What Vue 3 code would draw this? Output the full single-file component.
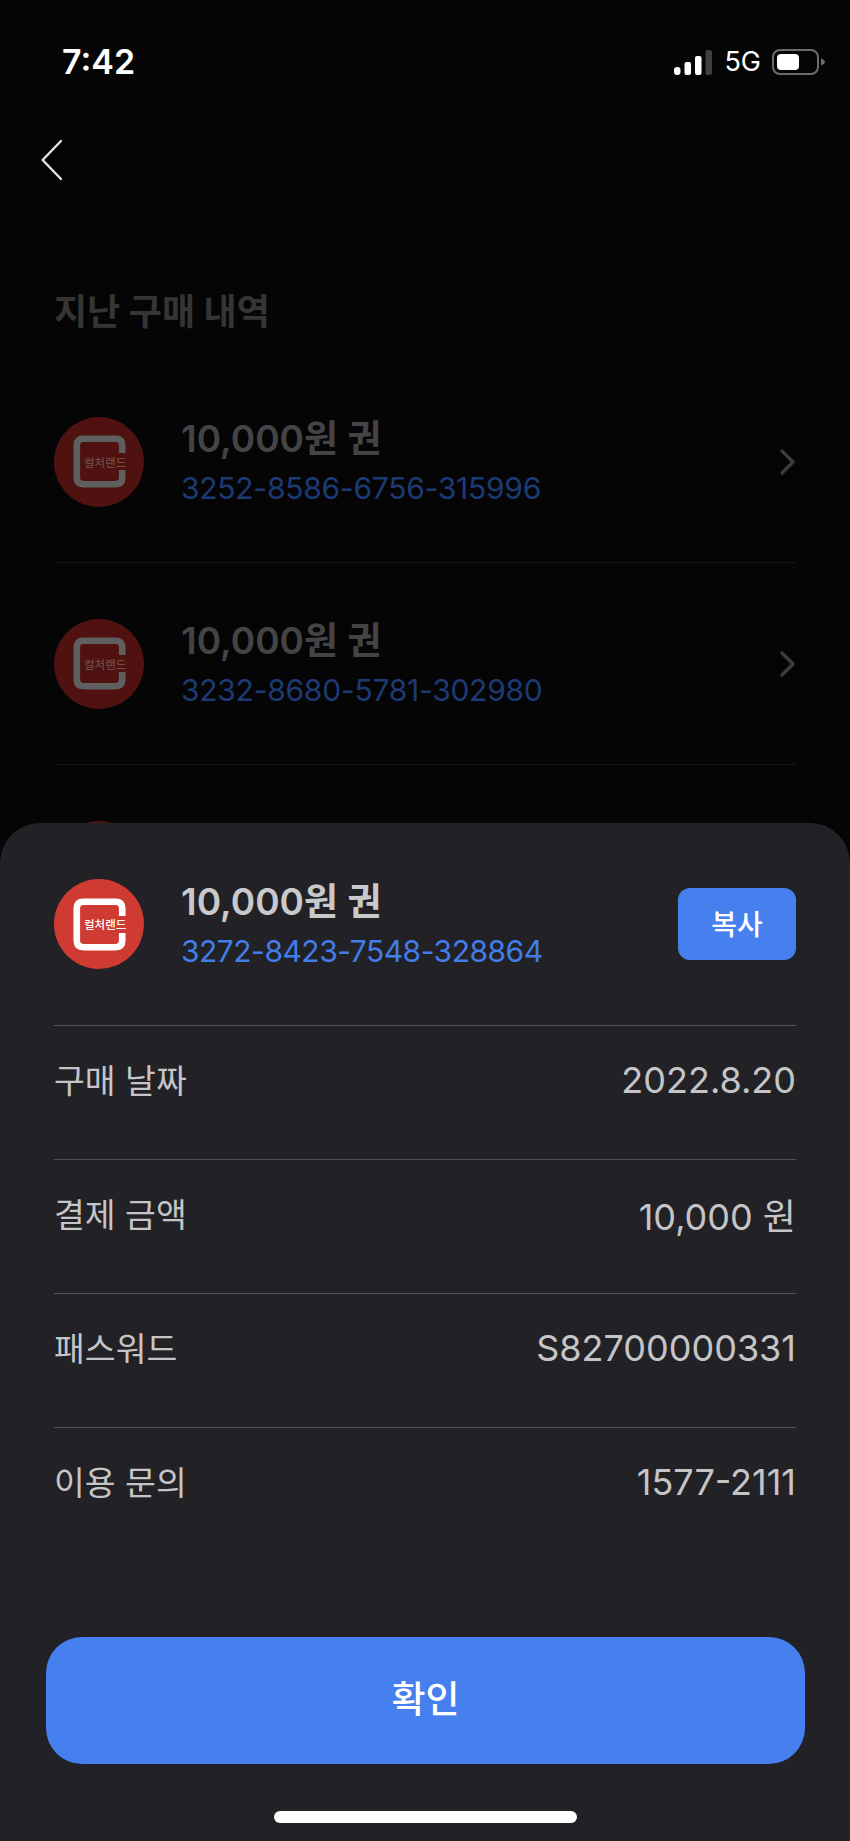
<script setup>
// third row sits behind the sheet, only the top of its logo shows
const vouchers = [
  { id: 1, title: '10,000원 권', code: '3252-8586-6756-315996' },
  { id: 2, title: '10,000원 권', code: '3232-8680-5781-302980' },
  { id: 3, title: '', code: '' }
]

const details = [
  { label: '구매 날짜', value: '2022.8.20' },
  { label: '결제 금액', value: '10,000 원' },
  { label: '패스워드', value: 'S82700000331' },
  { label: '이용 문의', value: '1577-2111' }
]
</script>

<template>
  <div class="page">
    <div class="status">
      <span class="time">7:42</span>
      <div class="status-right">
        <svg class="signal" width="38" height="25" viewBox="0 0 38 25">
          <rect x="0" y="17" width="6.5" height="8" rx="3" fill="#fff" />
          <rect x="10.5" y="12" width="6.5" height="13" rx="2" fill="#fff" />
          <rect x="21" y="6" width="6.5" height="19" rx="2" fill="#fff" />
          <rect x="31.5" y="0" width="6.5" height="25" rx="2" fill="#3f3f3f" />
        </svg>
        <span class="net">5G</span>
        <svg class="battery" width="53" height="26" viewBox="0 0 53 26">
          <rect x="1" y="1" width="45" height="24" rx="7" fill="none" stroke="#6c6c6c" stroke-width="2" />
          <rect x="5" y="5" width="22" height="16" rx="4" fill="#fff" />
          <path d="M49 9.5 C51.5 10.5 53 12 53 13 C53 14 51.5 15.5 49 16.5 Z" fill="#6c6c6c" />
        </svg>
      </div>
    </div>

    <svg class="back" width="24" height="42" viewBox="0 0 24 42">
      <path d="M21 2 L2.6 21 L21 40" fill="none" stroke="#e4e4e4" stroke-width="2.4" stroke-linecap="round" stroke-linejoin="round" />
    </svg>

    <h1 class="heading">지난 구매 내역</h1>

    <ul class="list">
      <li v-for="v in vouchers" :key="v.id" class="list-row">
        <div class="logo dim">
          <svg width="53" height="53" viewBox="0 0 56 56">
            <path d="M52 19 V11 Q52 4 45 4 H11 Q4 4 4 11 V45 Q4 52 11 52 H45 Q52 52 52 45 V37" fill="none" stroke="#5f5f5f" stroke-width="7" />
          </svg>
          <span v-if="v.code" class="logo-text">컬처랜드</span>
        </div>
        <div v-if="v.code" class="info">
          <div class="name">{{ v.title }}</div>
          <div class="code">{{ v.code }}</div>
        </div>
        <svg v-if="v.code" class="chev" width="18" height="28" viewBox="0 0 18 28">
          <path d="M3 3 L14 14 L3 25" fill="none" stroke="#3c3c3e" stroke-width="3.4" stroke-linecap="round" stroke-linejoin="round" />
        </svg>
      </li>
    </ul>

    <section class="sheet">
      <div class="sheet-head">
        <div class="logo">
          <svg width="53" height="53" viewBox="0 0 56 56">
            <path d="M52 19 V11 Q52 4 45 4 H11 Q4 4 4 11 V45 Q4 52 11 52 H45 Q52 52 52 45 V37" fill="none" stroke="#fff" stroke-width="7" />
          </svg>
          <span class="logo-text">컬처랜드</span>
        </div>
        <div class="info">
          <div class="name">10,000원 권</div>
          <div class="code">3272-8423-7548-328864</div>
        </div>
        <button class="copy" type="button">복사</button>
      </div>

      <div class="details">
        <div v-for="d in details" :key="d.label" class="detail">
          <span class="detail-label">{{ d.label }}</span>
          <span class="detail-value">{{ d.value }}</span>
        </div>
      </div>

      <button class="confirm" type="button">확인</button>
      <div class="home-bar"></div>
    </section>
  </div>
</template>

<style>
html, body { margin: 0; background: #050506; }
</style>

<style scoped>
.page {
  position: relative;
  width: 850px;
  height: 1841px;
  overflow: hidden;
  background: #050506;
  font-family: Inter, "Noto Sans CJK KR", sans-serif;
  color: #fff;
}
.status {
  display: flex;
  justify-content: space-between;
  align-items: center;
  height: 28px;
  padding: 48px 25px 0 62px;
}
.time { font-size: 34px; font-weight: 600; line-height: 28px; }
.status-right { display: flex; align-items: center; gap: 12px; }
.net { font-size: 27px; line-height: 28px; margin-right: -1px; }
.back { display: block; margin: 63px 0 0 40px; }
.heading {
  margin: 107px 0 25px 54px;
  font-size: 36px;
  line-height: 48px;
  font-weight: 700;
  color: #353535;
}
.list { list-style: none; margin: 0; padding: 0 54px; }
.list-row {
  display: flex;
  align-items: center;
  height: 145px;
  padding: 28px 0;
  border-bottom: 1px solid #16161a;
}
.logo {
  position: relative;
  flex: none;
  width: 90px;
  height: 90px;
  margin-right: 37px;
  border-radius: 50%;
  background: #cf3a32;
  display: flex;
  align-items: center;
  justify-content: center;
}
.logo.dim { background: #4f1210; }
.logo-text {
  position: absolute;
  left: 30px;
  top: 38px;
  font-size: 11.5px;
  line-height: 16px;
  font-weight: 500;
  white-space: nowrap;
  color: #fff;
}
.logo.dim .logo-text { color: #6e4a48; }
.info { flex: 1; margin-top: 4px; }
.name { font-size: 37px; line-height: 46px; font-weight: 600; color: #444446; }
.code { margin-top: 3px; font-size: 30px; line-height: 46px; letter-spacing: -0.25px; color: #1d3a74; }
.chev { flex: none; margin-right: -1px; }
.sheet {
  position: absolute;
  left: 0;
  right: 0;
  top: 823px;
  bottom: 0;
  background: #212126;
  border-radius: 40px 40px 0 0;
  padding: 0 54px;
}
.sheet-head {
  display: flex;
  align-items: center;
  height: 203px;
  box-sizing: border-box;
  border-bottom: 1px solid #515156;
}
.sheet-head .name { color: #c9c9cc; }
.sheet-head .code { color: #437de9; letter-spacing: -0.5px; }
.copy {
  flex: none;
  width: 118px;
  height: 72px;
  padding: 0 0 3px;
  border: 0;
  border-radius: 12px;
  background: #467fee;
  color: #fff;
  font: 500 28px "Noto Sans CJK KR", sans-serif;
}
.detail {
  display: flex;
  justify-content: space-between;
  align-items: center;
  box-sizing: border-box;
  height: 134px;
  padding-bottom: 25px;
  border-bottom: 1px solid #515156;
  color: #c5c5c8;
}
.detail:last-child { height: 133px; border-bottom: 0; }
.detail-label { font-size: 33.5px; padding-bottom: 4px; }
.detail-value { font-size: 36px; }
.confirm {
  display: block;
  width: 759px;
  height: 127px;
  margin: 76px 0 0 -8px;
  padding: 0 0 8px;
  border: 0;
  border-radius: 36px;
  background: #467fee;
  color: #fff;
  font: 500 37px "Noto Sans CJK KR", sans-serif;
}
.home-bar {
  width: 303px;
  height: 12px;
  margin: 47px 0 0 220px;
  border-radius: 6px;
  background: #fff;
}
</style>
